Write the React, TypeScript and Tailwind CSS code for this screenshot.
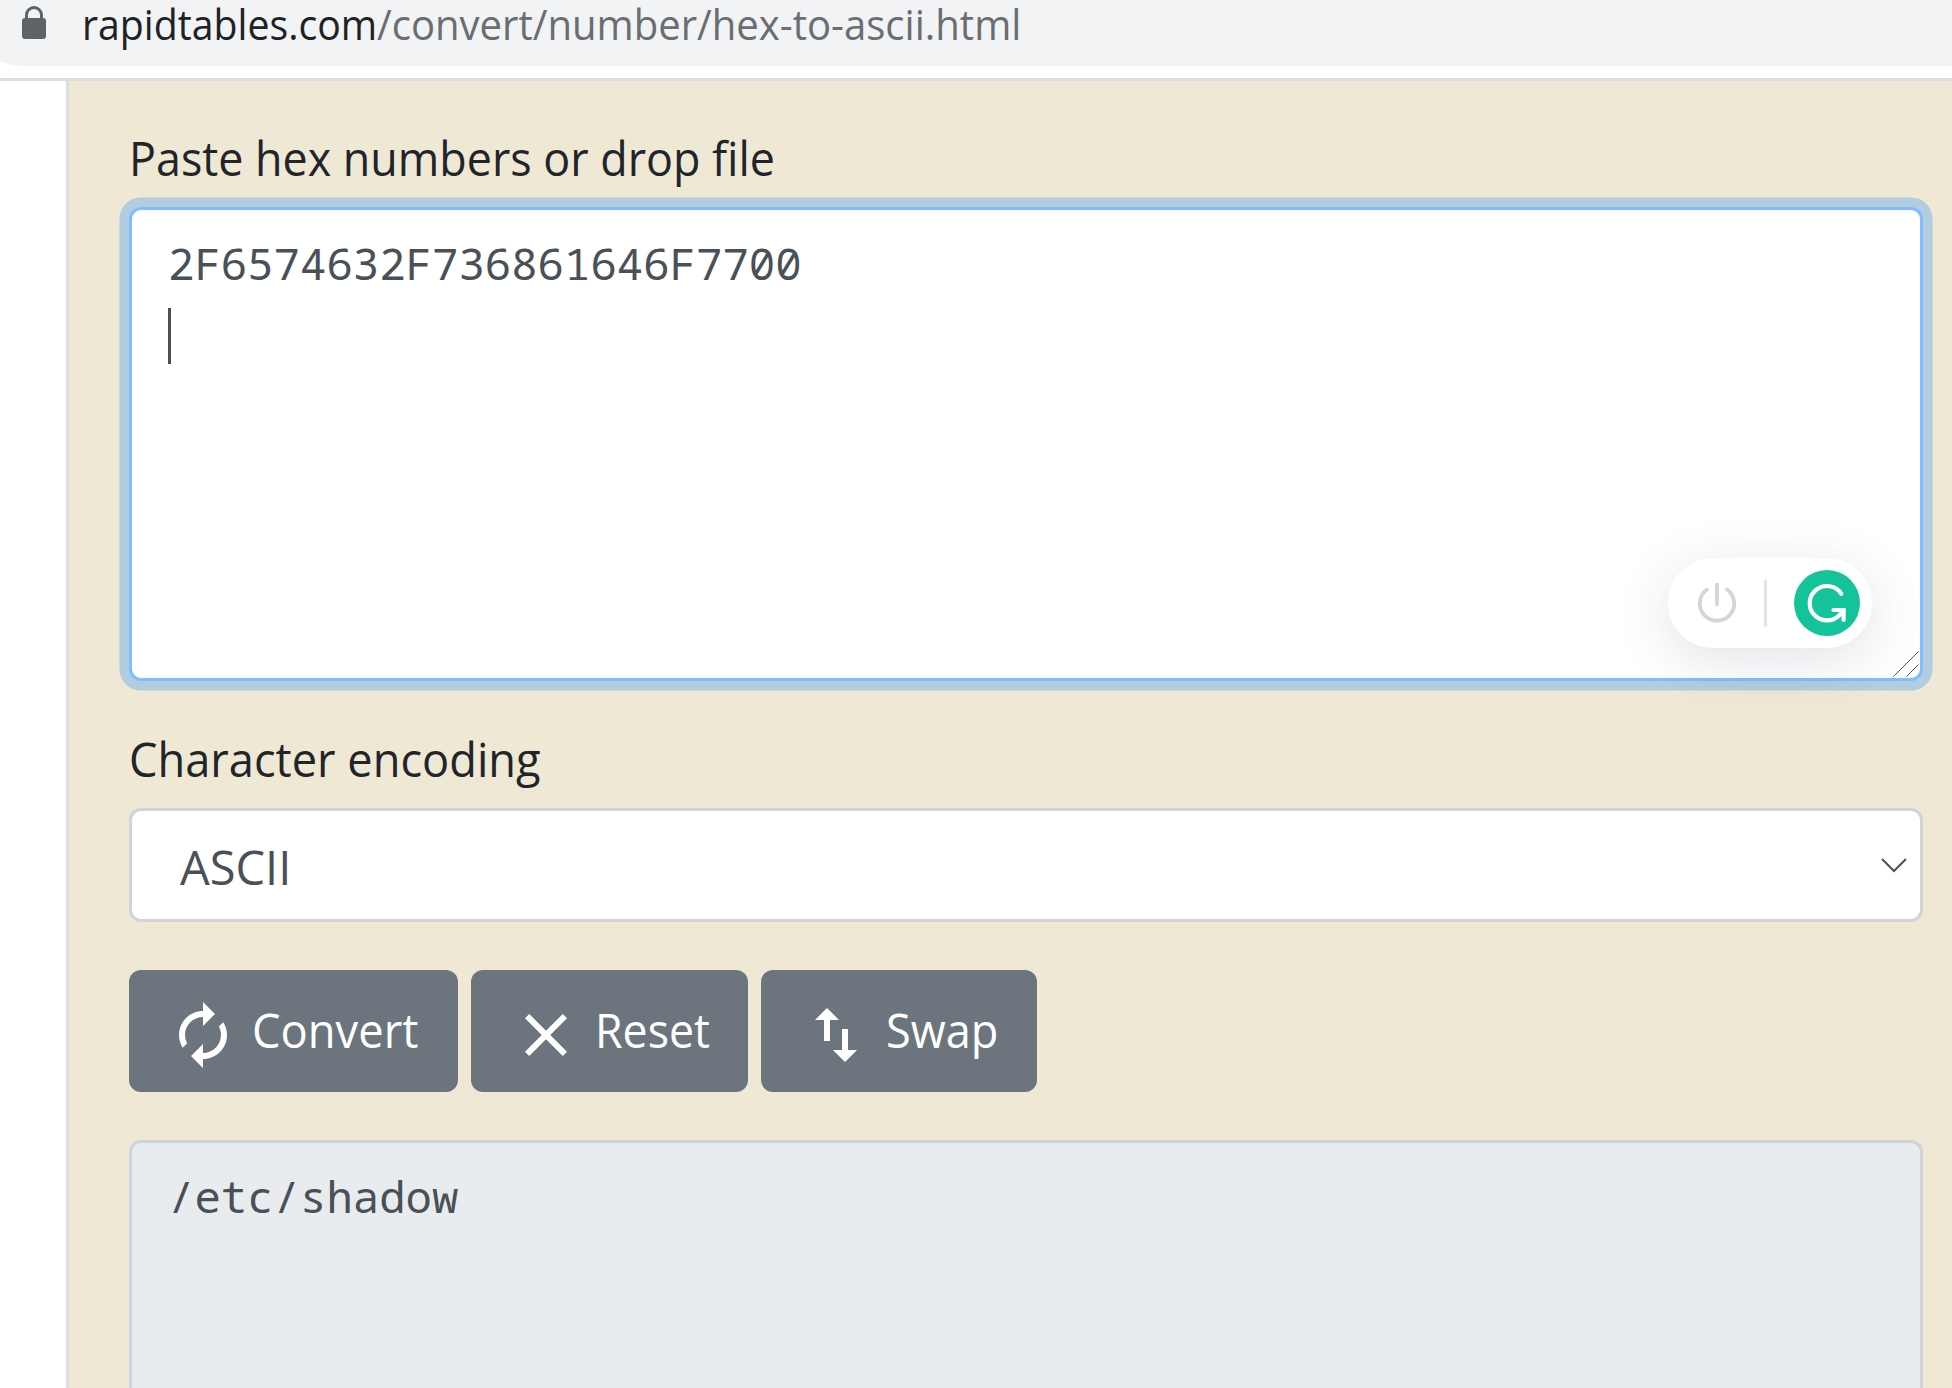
import { MdAutorenew, MdClose, MdSwapVert } from "react-icons/md";
import type { ReactNode } from "react";

function AddressBar() {
  return (
    <header className="h-[81px] shrink-0 border-b-[3px] border-[#dadce0] bg-white">
      <div className="-ml-[22px] flex h-[66px] items-start rounded-bl-[42px] bg-[#f1f3f4] pl-[44px]">
        <svg className="mt-[6px] h-[33px] w-[24px] shrink-0" viewBox="0 0 24 33">
          <path d="M4.5 14V9a7.5 7.5 0 0 1 15 0v5" fill="none" stroke="#5f6368" strokeWidth="3" />
          <rect x="0" y="12" width="24" height="21" rx="3" fill="#5f6368" />
        </svg>
        <p className="ml-[36px] flex whitespace-nowrap text-[42px] leading-[48px] text-[#6a6d71]">
          <span className="-mr-[21px] origin-left scale-x-[0.934] text-[#202124]">rapidtables.com</span>
          <span className="origin-left scale-x-[0.954]">/convert/number/hex-to-ascii.html</span>
        </p>
      </div>
    </header>
  );
}

function Label({ children, className }: { children: ReactNode; className: string }) {
  return <div className={`h-[72px] origin-left whitespace-nowrap text-[47px] leading-[74px] text-[#212529] ${className}`}>{children}</div>;
}

function Button({ icon, children, className, textClass }: { icon: ReactNode; children: ReactNode; className: string; textClass: string }) {
  return (
    <button className={`flex h-[122px] items-start rounded-[12px] bg-[#6c757d] pt-[29px] text-white ${className}`}>
      {icon}
      <span className={`-mt-[5px] origin-left whitespace-nowrap text-[47px] leading-[72px] ${textClass}`}>{children}</span>
    </button>
  );
}

function GrammarBadge() {
  return (
    <div className="absolute bottom-[30px] right-[48px] flex h-[90px] w-[204px] items-center rounded-full bg-white pl-[29px] pr-[12px] shadow-[0_12px_54px_rgba(60,64,100,0.15)]">
      <svg className="h-[40px] w-[40px]" viewBox="0 0 40 40" fill="none" stroke="#d5d5d5" strokeWidth="3.8" strokeLinecap="round">
        <path d="M10 6.5A17.2 17.2 0 1 0 30 6.5M20 1.5V21.5" />
      </svg>
      <div className="ml-[27px] h-[48px] w-[3px] rounded-full bg-[#e2e3e6]" />
      <svg className="ml-auto h-[66px] w-[66px]" viewBox="0 0 66 66" fill="none">
        <circle cx="33" cy="33" r="33" fill="#15c39a" />
        <path d="M47.3 23.8A17.2 17.2 0 1 0 45 45.5L49.5 41" stroke="#fff" strokeWidth="4.2" strokeLinecap="round" />
        <path d="M39.5 40H49.6V50" stroke="#fff" strokeWidth="4.2" strokeLinecap="round" />
        <path d="M43 40H49.6V47Z" fill="#fff" />
      </svg>
    </div>
  );
}

export default function App() {
  return (
    <div className="flex h-[1388px] w-[1952px] flex-col overflow-hidden bg-white font-['Open_Sans','Noto_Sans',sans-serif]">
      <AddressBar />
      <main className="ml-[66px] flex-1 border-l-[3px] border-[#dcdddf] bg-[#eee8d5] pl-[60px] pr-[29px] pt-[40px]">
        <Label className="scale-x-[0.954]">Paste hex numbers or drop file</Label>
        <div className="relative mt-[14px] h-[474px] rounded-[12px] border-[3px] border-[#80bdff] bg-white px-[36px] pt-[18px] shadow-[0_0_0_9.6px_rgba(0,123,255,0.25)]">
          <p className="font-['Noto_Sans_Mono','DejaVu_Sans_Mono',monospace] text-[44px] leading-[70px] text-[#495057]">2F6574632F736861646F7700</p>
          <div className="mt-[10px] h-[56px] w-[3px] bg-[#495057]" />
          <GrammarBadge />
          <svg className="absolute bottom-[1px] right-[1px] h-[26px] w-[26px]" viewBox="0 0 26 26" stroke="#555" strokeWidth="1">
            <path d="M0.5 25.5L25.5 0.5M13.5 25.5L25.5 13.5" />
          </svg>
        </div>
        <Label className="mt-[41px] scale-x-[0.962]">Character encoding</Label>
        <div className="mt-[14px] flex h-[114px] items-center justify-between rounded-[12px] border-[3px] border-[#ced4da] bg-white pl-[48px] pr-[12px] text-[#495057]">
          <span className="mt-[4px] text-[47px] leading-[72px]">ASCII</span>
          <svg className="h-[16px] w-[28px]" viewBox="0 0 28 16" fill="none" stroke="#495057" strokeWidth="2">
            <path d="M2 2L14 14L26 2" />
          </svg>
        </div>
        <div className="mt-[48px] flex gap-[13px]">
          <Button className="w-[329px] pl-[38px]" textClass="ml-[13px] scale-x-[0.964]" icon={<MdAutorenew className="size-[72px] shrink-0" />}>Convert</Button>
          <Button className="w-[277px] pl-[39px]" textClass="ml-[13px] scale-x-[0.95]" icon={<MdClose className="size-[72px] shrink-0" />}>Reset</Button>
          <Button className="w-[276px] pl-[39px]" textClass="ml-[14px] scale-x-[0.96]" icon={<MdSwapVert className="size-[72px] shrink-0" />}>Swap</Button>
        </div>
        <div className="mt-[48px] h-[480px] rounded-[12px] border-[3px] border-[#ced4da] bg-[#e9ecef] px-[36px] pt-[18px]">
          <p className="font-['Noto_Sans_Mono','DejaVu_Sans_Mono',monospace] text-[44px] leading-[70px] text-[#495057]">/etc/shadow</p>
        </div>
      </main>
    </div>
  );
}
